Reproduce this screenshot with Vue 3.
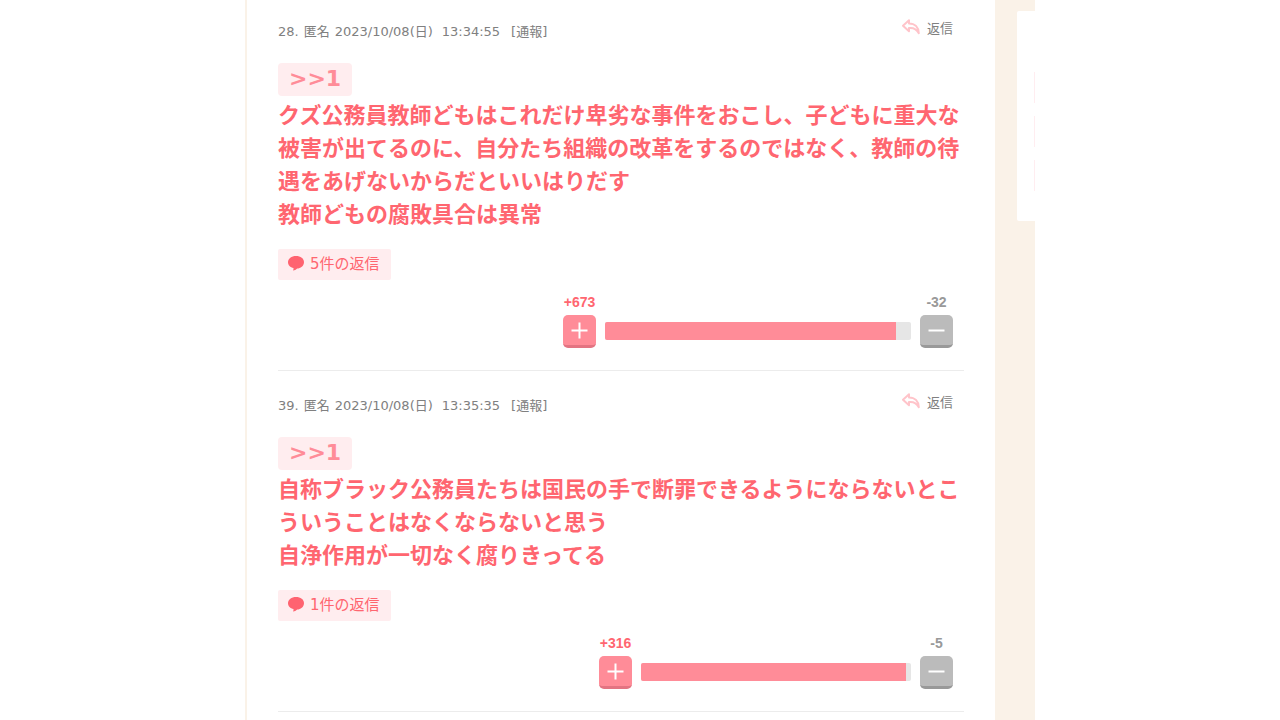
<script setup>
const comments = [
  {
    id: 28,
    date: '2023/10/08(日)',
    time: '13:34:55',
    lines: [
      'クズ公務員教師どもはこれだけ卑劣な事件をおこし、子どもに重大な被害が出てるのに、自分たち組織の改革をするのではなく、教師の待遇をあげないからだといいはりだす',
      '教師どもの腐敗具合は異常',
    ],
    replies: 5,
    plus: 673,
    minus: 32,
    barWidth: 306,
    fill: 95,
  },
  {
    id: 39,
    date: '2023/10/08(日)',
    time: '13:35:35',
    lines: [
      '自称ブラック公務員たちは国民の手で断罪できるようにならないとこういうことはなくならないと思う',
      '自浄作用が一切なく腐りきってる',
    ],
    replies: 1,
    plus: 316,
    minus: 5,
    barWidth: 270,
    fill: 98,
  },
]
</script>

<template>
  <div class="page">
    <main class="thread">
      <article v-for="c in comments" :key="c.id" class="comment">
        <header class="head">
          <p class="meta">
            <span>{{ c.id }}.</span>
            <span>匿名</span>
            <span class="date">{{ c.date }}</span>
            <span>{{ c.time }}</span>
            <a href="#report" class="report">[通報]</a>
          </p>
          <a href="#reply" class="reply">
            <svg width="18" height="16" viewBox="0 0 18 16" aria-hidden="true">
              <path d="M7 1.2 1 6.7 7 12.2V9C11.2 8.5 14.6 10 16.8 14.2 16.6 8.2 12.8 4.4 7 4.4Z" />
            </svg>
            <span>返信</span>
          </a>
        </header>
        <a href="#comment-1" class="anchor">&gt;&gt;1</a>
        <div class="body">
          <p v-for="line in c.lines" :key="line">{{ line }}</p>
        </div>
        <a href="#replies" class="replies">
          <svg width="16" height="15" viewBox="0 0 16 15" aria-hidden="true">
            <path d="M8 0C12.6 0 16 2.5 16 6.2 16 10 12.4 12.4 9.2 12.5 8 13.6 6.7 14.4 5 14.6 5.5 13.9 5.6 13 5.5 12.1 2.3 11.4 0 9.3 0 6.3 0 2.6 3.5 0 8 0Z" />
          </svg>
          <span>{{ c.replies }}件の返信</span>
        </a>
        <div class="votes">
          <div class="vote plus">
            <span>+{{ c.plus }}</span>
            <button type="button" aria-label="プラス">
              <svg width="17" height="17" viewBox="0 0 17 17" aria-hidden="true">
                <path d="M8.5 .5V16.5M.5 8.5H16.5" />
              </svg>
            </button>
          </div>
          <div class="bar" :style="{ width: c.barWidth + 'px' }">
            <div class="fill" :style="{ width: c.fill + '%' }"></div>
          </div>
          <div class="vote minus">
            <span>-{{ c.minus }}</span>
            <button type="button" aria-label="マイナス">
              <svg width="17" height="17" viewBox="0 0 17 17" aria-hidden="true">
                <path d="M.5 8.5H16.5" />
              </svg>
            </button>
          </div>
        </div>
      </article>
    </main>
    <aside class="side">
      <div class="card">
        <i></i><i></i><i></i>
      </div>
    </aside>
  </div>
</template>

<style>
body {
  background: #fff;
}
</style>

<style scoped>
.page {
  display: flex;
  max-width: 790px;
  height: 100vh;
  margin: 0 auto;
  overflow: hidden;
  background: #faf2e8;
  font-family: "DejaVu Sans", "Noto Sans CJK JP", sans-serif;
}
p {
  margin: 0;
}
a {
  color: inherit;
  text-decoration: none;
}
.thread {
  flex: 1;
  min-width: 0;
  margin-left: 2px;
  padding: 0 31px;
  background: #fff;
}
.comment {
  display: flex;
  flex-direction: column;
  align-items: flex-start;
  padding: 22px 0;
  border-bottom: 1px solid #ececec;
}
.comment:first-child {
  padding-top: 19px;
}
.head {
  display: flex;
  justify-content: space-between;
  align-self: stretch;
  height: 44px;
  padding-right: 11px;
  color: #808080;
  font-size: 13px;
  line-height: 20px;
}
.meta {
  display: flex;
  gap: 5px;
  padding-top: 3px;
}
.date {
  min-width: 102px;
}
.report {
  margin-left: 6px;
}
.reply {
  display: flex;
  gap: 7px;
}
.reply svg {
  fill: none;
  stroke: #ffc4ca;
  stroke-width: 2;
  stroke-linejoin: round;
}
.anchor {
  height: 33px;
  padding: 0 11px;
  border-radius: 4px;
  background: #ffedef;
  color: #ff8c98;
  font-size: 22px;
  font-weight: bold;
  line-height: 31px;
}
.body {
  margin-bottom: 18px;
  padding-top: 3px;
  color: #ff6670;
  font-size: 22px;
  font-weight: bold;
  line-height: 33px;
  overflow-wrap: anywhere;
}
.replies {
  display: flex;
  gap: 6px;
  height: 31px;
  padding: 0 11px 0 10px;
  border-radius: 2px;
  background: #ffedef;
  color: #ff6670;
  font-size: 15px;
  line-height: 31px;
}
.replies svg {
  margin-top: 7px;
  fill: #ff6370;
}
.votes {
  display: flex;
  align-items: flex-end;
  align-self: flex-end;
  gap: 9px;
  padding: 12px 11px 0 0;
}
.vote {
  display: flex;
  flex-direction: column;
  align-items: center;
  gap: 3px;
  width: 33px;
  font: bold 14px/20px "Liberation Sans", sans-serif;
}
.vote button {
  display: flex;
  align-items: center;
  justify-content: center;
  width: 33px;
  height: 33px;
  padding: 0;
  border: 0;
  border-bottom: 3px solid;
  border-radius: 5px;
}
.vote svg {
  stroke: #fff;
  stroke-width: 2;
}
.plus {
  color: #ff6670;
}
.plus button {
  border-color: #e37482;
  background: #ff8c98;
}
.minus {
  color: #999;
}
.minus button {
  border-color: #999;
  background: #bbb;
}
.bar {
  height: 18px;
  margin-bottom: 8px;
  overflow: hidden;
  border-radius: 2px;
  background: #e6e6e6;
}
.fill {
  height: 100%;
  background: #ff8c98;
}
.side {
  width: 40px;
  overflow: hidden;
}
.card {
  display: flex;
  flex-direction: column;
  align-items: flex-end;
  gap: 13px;
  margin: 11px 0 0 22px;
  padding: 61px 0 30px;
  border-radius: 2px 0 0 2px;
  background: #fff;
}
.card i {
  width: 1px;
  height: 31px;
  background: #ffedf0;
}
</style>
